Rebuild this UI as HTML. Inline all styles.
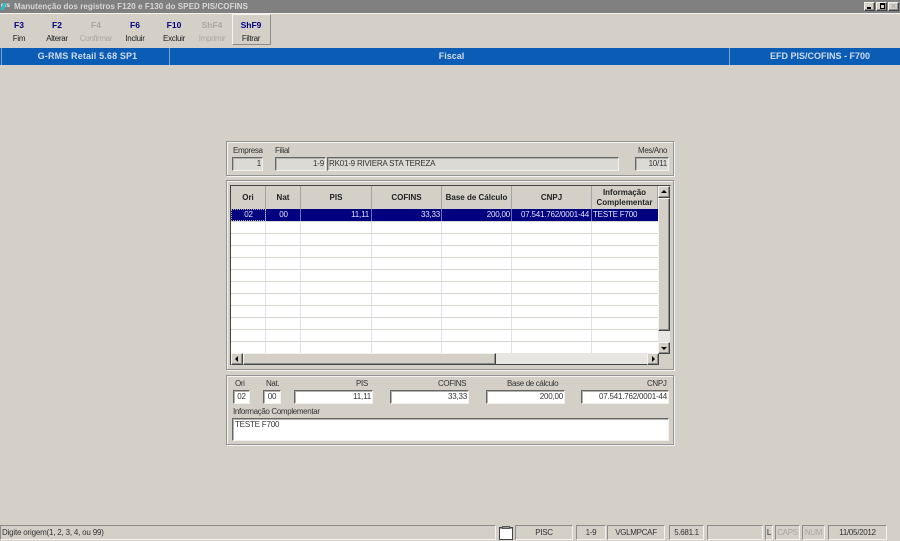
<!DOCTYPE html>
<html><head><meta charset="utf-8">
<style>
html,body{margin:0;padding:0;width:900px;height:541px;overflow:hidden;background:#d4d0c8}
body{position:relative;font-family:"Liberation Sans",sans-serif;font-size:8px;color:#222}
div{position:absolute;box-sizing:border-box;white-space:nowrap}
.tb{width:40px;text-align:center}
.k{top:20px;font-weight:bold;font-size:8.5px;color:#000080}
.l{top:34px;font-size:8px;letter-spacing:-.3px;color:#222}
.in{border:1px solid;border-color:#666 #f2f1ee #f2f1ee #666;background:#dcdad5;line-height:12px;padding:0 1px;text-align:right;font-size:8px;letter-spacing:-.2px;color:#333;box-shadow:inset 1px 1px 0 #b4b2ac}
.panel{border:1px solid #949494;box-shadow:inset 1px 1px 0 #f4f3f0,1px 1px 0 #f4f3f0}
.w{background:#fff;height:14px}
.h{top:186px;height:23px;background:#d4d0c8;border-right:1px solid #a4a4a4;text-align:center;font-weight:bold;font-size:8px;line-height:23px;color:#222}
.c{top:209px;height:12px;line-height:12px;color:#e4e6f0;font-size:8px;letter-spacing:-.2px;padding:0 1px}
.v{top:209px;width:1px;height:144px;background:#c8c8d8;opacity:.55}
.r{left:231px;width:427px;height:1px;background:#d8d5ce}
.lb{font-size:8px;letter-spacing:-.35px;color:#333}
.s{top:525px;height:15px;border:1px solid;border-color:#8c8c8c #f4f3f0 #f4f3f0 #8c8c8c;text-align:center;line-height:13px;font-size:8px;letter-spacing:-.3px;color:#333}
.btn{background:#d4d0c8;border:1px solid;border-color:#f4f3f0 #444 #444 #f4f3f0;box-shadow:inset -1px -1px 0 #8c8c8c}
.dis{color:#aaa8a2}
</style></head>
<body>
<div style="left:0;top:0;width:900px;height:13px;background:#808080"></div>
<div style="left:0;top:13px;width:900px;height:1px;background:#f4f3f0"></div>
<div style="left:1px;top:2px;width:13px;height:9px;font-size:6px;line-height:9px;font-weight:bold;color:#eee">rvs</div>
<div style="left:2px;top:3px;width:3px;height:7px;background:#20c0d0;transform:skewX(-25deg)"></div>
<div style="left:14px;top:0;height:13px;line-height:13px;font-size:8px;font-weight:bold;color:#d8d8d8;letter-spacing:.06px">Manutenção dos registros F120 e F130 do SPED PIS/COFINS</div>

<div class="btn" style="left:864px;top:2px;width:11px;height:9px"><div style="left:2px;top:4px;width:4px;height:2px;background:#000"></div></div>
<div class="btn" style="left:876px;top:2px;width:11px;height:9px"><div style="left:3px;top:0;width:5px;height:6px;border:1px solid #000;border-top-width:2px"></div></div>
<div class="btn" style="left:888px;top:2px;width:11px;height:9px;color:#999;font-size:9px;line-height:7px;text-align:center">×</div>

<div style="left:232px;top:14px;width:39px;height:31px;border:1px solid;border-color:#f4f3f0 #8c8c8c #8c8c8c #f4f3f0"></div>
<div class="tb k" style="left:-1px">F3</div><div class="tb l" style="left:-1px">Fim</div>
<div class="tb k" style="left:37px">F2</div><div class="tb l" style="left:37px">Alterar</div>
<div class="tb k dis" style="left:76px">F4</div><div class="tb l dis" style="left:76px">Confirmar</div>
<div class="tb k" style="left:115px">F6</div><div class="tb l" style="left:115px">Incluir</div>
<div class="tb k" style="left:154px">F10</div><div class="tb l" style="left:154px">Excluir</div>
<div class="tb k dis" style="left:192px">ShF4</div><div class="tb l dis" style="left:192px">Imprimir</div>
<div class="tb k" style="left:231px">ShF9</div><div class="tb l" style="left:231px">Filtrar</div>

<div style="left:0;top:48px;width:900px;height:17px;background:#0a5cb4"></div>
<div style="left:1px;top:48px;width:1px;height:17px;background:#7f9fc0"></div>
<div style="left:169px;top:48px;width:1px;height:17px;background:#7f9fc0"></div>
<div style="left:729px;top:48px;width:1px;height:17px;background:#7f9fc0"></div>
<div style="left:4px;top:48px;width:167px;height:17px;line-height:17px;text-align:center;color:#d0dcec;font-size:9px;font-weight:bold;letter-spacing:.15px">G-RMS Retail 5.68 SP1</div>
<div style="left:172px;top:48px;width:559px;height:17px;line-height:17px;text-align:center;color:#d0dcec;font-size:9px;font-weight:bold">Fiscal</div>
<div style="left:735px;top:48px;width:170px;height:17px;line-height:17px;text-align:center;color:#d0dcec;font-size:9px;font-weight:bold">EFD PIS/COFINS - F700</div>

<!-- panel 1 -->
<div class="panel" style="left:226px;top:141px;width:448px;height:35px"></div>
<div class="lb" style="left:233px;top:146px">Empresa</div>
<div class="lb" style="left:275px;top:146px">Filial</div>
<div class="lb" style="left:638px;top:146px">Mes/Ano</div>
<div class="in" style="left:232px;top:157px;width:31px;height:14px">1</div>
<div class="in" style="left:275px;top:157px;width:51px;height:14px">1-9</div>
<div class="in" style="left:327px;top:157px;width:292px;height:14px;text-align:left;line-height:11px">RK01-9 RIVIERA STA TEREZA</div>
<div class="in" style="left:635px;top:157px;width:34px;height:14px">10/11</div>

<!-- panel 2 -->
<div class="panel" style="left:226px;top:180px;width:448px;height:190px"></div>
<div style="left:230px;top:185px;width:441px;height:180px;border:1px solid;border-color:#444 #d4d0c8 #444 #444;background:#fff"></div>
<div class="h" style="left:231px;width:35px">Ori</div>
<div class="h" style="left:266px;width:35px">Nat</div>
<div class="h" style="left:301px;width:71px">PIS</div>
<div class="h" style="left:372px;width:70px">COFINS</div>
<div class="h" style="left:442px;width:70px">Base de Cálculo</div>
<div class="h" style="left:512px;width:80px">CNPJ</div>
<div class="h" style="left:592px;width:66px;line-height:10px;padding-top:2px;white-space:normal">Informação Complementar</div>
<div style="left:231px;top:209px;width:427px;height:12px;background:#000080"></div>
<div style="left:231px;top:209px;width:35px;height:12px;border:1px dotted #aaa"></div>
<div class="c" style="left:231px;width:35px;text-align:center">02</div>
<div class="c" style="left:266px;width:35px;text-align:center">00</div>
<div class="c" style="left:301px;width:69px;text-align:right">11,11</div>
<div class="c" style="left:372px;width:69px;text-align:right">33,33</div>
<div class="c" style="left:442px;width:69px;text-align:right">200,00</div>
<div class="c" style="left:512px;width:78px;text-align:right">07.541.762/0001-44</div>
<div class="c" style="left:592px;width:66px">TESTE F700</div>
<div class="v" style="left:265px"></div><div class="v" style="left:300px"></div><div class="v" style="left:371px"></div><div class="v" style="left:441px"></div><div class="v" style="left:511px"></div><div class="v" style="left:591px"></div>
<div class="r" style="top:221px"></div><div class="r" style="top:233px"></div><div class="r" style="top:245px"></div><div class="r" style="top:257px"></div><div class="r" style="top:269px"></div><div class="r" style="top:281px"></div><div class="r" style="top:293px"></div><div class="r" style="top:305px"></div><div class="r" style="top:317px"></div><div class="r" style="top:329px"></div><div class="r" style="top:341px"></div>
<!-- scrollbars -->
<div style="left:658px;top:186px;width:12px;height:167px;background:#e8e6e2"></div>
<div class="btn" style="left:658px;top:186px;width:12px;height:12px"><div style="left:2px;top:3px;width:0;height:0;border-left:3px solid transparent;border-right:3px solid transparent;border-bottom:3px solid #000"></div></div>
<div class="btn" style="left:658px;top:198px;width:12px;height:133px"></div>
<div class="btn" style="left:658px;top:342px;width:12px;height:12px"><div style="left:2px;top:4px;width:0;height:0;border-left:3px solid transparent;border-right:3px solid transparent;border-top:3px solid #000"></div></div>
<div style="left:231px;top:353px;width:427px;height:11px;background:#e8e6e2"></div>
<div style="left:658px;top:354px;width:13px;height:12px;background:#d4d0c8"></div>
<div class="btn" style="left:231px;top:353px;width:12px;height:12px"><div style="left:3px;top:2px;width:0;height:0;border-top:3px solid transparent;border-bottom:3px solid transparent;border-right:3px solid #000"></div></div>
<div class="btn" style="left:243px;top:353px;width:253px;height:12px"></div>
<div class="btn" style="left:647px;top:353px;width:12px;height:12px"><div style="left:4px;top:2px;width:0;height:0;border-top:3px solid transparent;border-bottom:3px solid transparent;border-left:3px solid #000"></div></div>

<!-- panel 3 -->
<div class="panel" style="left:226px;top:375px;width:448px;height:70px"></div>
<div class="lb" style="left:235px;top:379px">Ori</div>
<div class="lb" style="left:266px;top:379px">Nat.</div>
<div class="lb" style="left:356px;top:379px">PIS</div>
<div class="lb" style="left:438px;top:379px">COFINS</div>
<div class="lb" style="left:507px;top:379px">Base de cálculo</div>
<div class="lb" style="left:647px;top:379px">CNPJ</div>
<div class="in w" style="left:233px;top:390px;width:17px;text-align:center;padding:0">02</div>
<div class="in w" style="left:263px;top:390px;width:18px;text-align:center;padding:0">00</div>
<div class="in w" style="left:294px;top:390px;width:79px">11,11</div>
<div class="in w" style="left:390px;top:390px;width:79px">33,33</div>
<div class="in w" style="left:486px;top:390px;width:79px">200,00</div>
<div class="in w" style="left:581px;top:390px;width:88px">07.541.762/0001-44</div>
<div class="lb" style="left:233px;top:407px">Informação Complementar</div>
<div class="in w" style="left:232px;top:418px;width:437px;height:23px;text-align:left;padding-left:2px">TESTE F700</div>

<!-- status -->
<div class="s" style="left:0;width:496px;text-align:left;padding-left:1px;letter-spacing:-.2px">Digite origem(1, 2, 3, 4, ou 99)</div>
<div style="left:499px;top:527px;width:14px;height:13px;border:1px solid #444;background:#fff;box-shadow:inset 0 1px 0 #999"></div>
<div style="left:502px;top:526px;width:8px;height:3px;background:#999;border:1px solid #555"></div>
<div class="s" style="left:515px;width:58px">PISC</div>
<div class="s" style="left:576px;width:30px">1-9</div>
<div class="s" style="left:607px;width:58px">VGLMPCAF</div>
<div class="s" style="left:669px;width:35px">5.681.1</div>
<div class="s" style="left:707px;width:56px"></div>
<div class="s" style="left:765px;width:8px">L</div>
<div class="s dis" style="left:775px;width:25px">CAPS</div>
<div class="s dis" style="left:802px;width:23px">NUM</div>
<div class="s" style="left:828px;width:59px">11/05/2012</div>
</body></html>
